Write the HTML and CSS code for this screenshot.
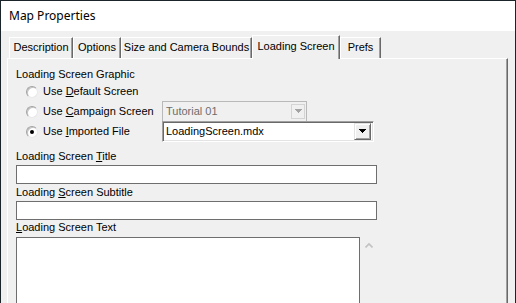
FILE: index.html
```html
<!DOCTYPE html>
<html lang="en">
<head>
  <meta charset="UTF-8">
  <title>Map Properties</title>
  <link rel="stylesheet" href="styles.css">
</head>
<body>
  <div class="window">
    <div class="titlebar">Map Properties</div>

    <div class="client">
      <div class="tabs">
        <div class="tab tab-desc">Description</div>
        <div class="tab tab-options">Options</div>
        <div class="tab tab-size">Size and Camera Bounds</div>
        <div class="tab tab-loading active">Loading Screen</div>
        <div class="tab tab-prefs">Prefs</div>
      </div>

      <div class="panel">
        <div class="group-label">Loading Screen Graphic</div>

        <div class="radio-row">
          <span class="radio"></span>
          <span class="radio-label">Use <u>D</u>efault Screen</span>
        </div>
        <div class="radio-row">
          <span class="radio"></span>
          <span class="radio-label">Use <u>C</u>ampaign Screen</span>
          <div class="combo disabled">
            <span class="combo-text">Tutorial 01</span>
            <span class="combo-btn">
              <svg width="7" height="4" viewBox="0 0 7 4"><path d="M0 0h7v1h-1v1h-1v1h-1v1h-1v-1h-1v-1h-1v-1h-1z" fill="#a3a3a3"/></svg>
            </span>
          </div>
        </div>
        <div class="radio-row">
          <span class="radio checked"></span>
          <span class="radio-label">Use <u>I</u>mported File</span>
          <div class="combo sunken">
            <span class="combo-text">LoadingScreen.mdx</span>
            <span class="combo-btn">
              <svg width="7" height="4" viewBox="0 0 7 4"><path d="M0 0h7v1h-1v1h-1v1h-1v1h-1v-1h-1v-1h-1v-1h-1z" fill="#000"/></svg>
            </span>
          </div>
        </div>

        <div class="field first">
          <div class="field-label">Loading Screen <u>T</u>itle</div>
          <div class="input"></div>
        </div>
        <div class="field">
          <div class="field-label">Loading <u>S</u>creen Subtitle</div>
          <div class="input"></div>
        </div>
        <div class="field last">
          <div class="field-label"><u>L</u>oading Screen Text</div>
          <div class="text-row">
            <div class="textarea"></div>
            <svg class="scroll-up" width="8" height="6" viewBox="0 0 8 6">
              <path d="M0.5 5.5 L4 2 L7.5 5.5" fill="none" stroke="#c2c2c2" stroke-width="1.6"/>
            </svg>
          </div>
        </div>
      </div>
    </div>
  </div>
</body>
</html>
```

FILE: styles.css
```css
html,
body {
  margin: 0;
}

body {
  background-color: #1b2428;
  font-family: 'Liberation Sans', Arial, sans-serif;
  font-size: 11px;
  line-height: 13px;
  color: #000;
  overflow: hidden;
}

.window {
  margin: 1px 1px 0 1px;
  width: 514px;
  height: 302px;
  background: #f0f0f0;
  overflow: hidden;
}

.titlebar {
  height: 30px;
  background: #fff;
  padding-left: 8px;
  font-family: 'Noto Sans', sans-serif;
  font-size: 12px;
  line-height: 30px;
  color: #000;
}

.client {
  padding: 4px 0 0 6px;
}

/* tab strip */
.tabs {
  display: flex;
  align-items: flex-end;
  height: 24px;
  padding-left: 2px;
  margin-bottom: -1px;
}

.tab {
  box-sizing: border-box;
  height: 21px;
  margin-bottom: 1px;
  padding-top: 3px;
  border-top: 1px solid #fff;
  border-left: 1px solid #fff;
  border-right: 1px solid #696969;
  box-shadow: inset -1px 0 #a0a0a0;
  text-align: center;
  white-space: nowrap;
}

.tab.active {
  position: relative;
  z-index: 1;
  height: 24px;
  margin-bottom: 0;
  padding-top: 4px;
  background: #f0f0f0;
}

.tab-desc { width: 64px; }
.tab-options { width: 48px; }
.tab-size { width: 131px; }
.tab-loading { width: 88px; }
.tab-prefs { width: 41px; }

.panel {
  box-sizing: border-box;
  width: 501px;
  height: 250px;
  padding: 9px 0 0 8px;
  border-top: 1px solid #fff;
  border-left: 1px solid #fff;
  border-right: 1px solid #696969;
  box-shadow: inset -1px 0 #a0a0a0;
}

.group-label {
  height: 13px;
}

/* radio rows */
.radio-row {
  display: flex;
  align-items: center;
  height: 20px;
  padding-left: 10px;
}

.radio {
  box-sizing: border-box;
  width: 12px;
  height: 12px;
  margin-top: 1px;
  margin-right: 5px;
  border-radius: 50%;
  background: #fff;
  border: 1px solid;
  border-color: #a2a2a2 #e8e8e8 #e8e8e8 #a2a2a2;
  box-shadow: inset 1px 1px #c4c4c4;
  display: flex;
  align-items: center;
  justify-content: center;
}

.radio.checked::after {
  content: "";
  width: 4px;
  height: 4px;
  border-radius: 50%;
  background: #000;
}

.radio-label {
  width: 119px;
  white-space: nowrap;
}

/* combo boxes */
.combo {
  box-sizing: border-box;
  height: 21px;
  display: flex;
  align-items: center;
  justify-content: space-between;
  flex-shrink: 0;
}

.combo.disabled {
  width: 145px;
  border: 1px solid #b9b9b9;
  background: #f0f0f0;
  color: #6d6d6d;
  padding: 0 1px 0 3px;
}

.combo.disabled .combo-btn {
  width: 14px;
  height: 15px;
  border: 1px solid #d4d4d4;
  background: #f0f0f0;
}

.combo.sunken {
  position: relative;
  width: 212px;
  border: 1px solid;
  border-color: #a0a0a0 #fff #fff #a0a0a0;
  box-shadow: inset 1px 1px #696969, inset -1px -1px #e3e3e3;
  background: #fff;
  padding: 0 2px 0 3px;
}

.combo-btn {
  box-sizing: border-box;
  display: flex;
  align-items: center;
  justify-content: center;
}

.combo.sunken .combo-btn {
  width: 17px;
  height: 17px;
  background: #f0f0f0;
  border: 1px solid;
  border-color: #e3e3e3 #696969 #696969 #e3e3e3;
  box-shadow: inset 1px 1px #fff, inset -1px -1px #a0a0a0;
}

/* text fields */
.field {
  margin-top: 2px;
}

.field.first {
  margin-top: 9px;
}

.field.last {
  margin-top: 1px;
}

.field-label {
  height: 13px;
  white-space: nowrap;
}

.input {
  box-sizing: border-box;
  width: 361px;
  height: 19px;
  margin-top: 2px;
  border: 1px solid #6e6e6e;
  background: #fff;
}

.text-row {
  display: flex;
  align-items: flex-start;
  margin-top: 3px;
}

.textarea {
  box-sizing: border-box;
  width: 344px;
  height: 90px;
  border: 1px solid #6e6e6e;
  background: #fff;
}

.scroll-up {
  margin: 5px 0 0 5px;
}
```
